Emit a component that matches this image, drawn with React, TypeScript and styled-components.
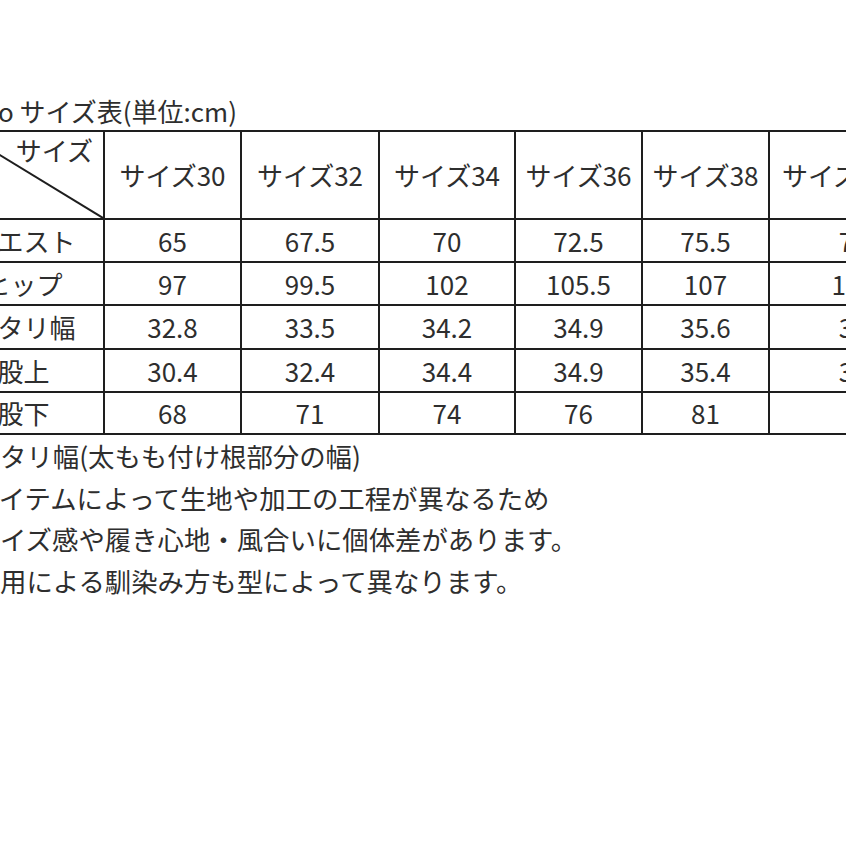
import React from 'react';
import styled, {createGlobalStyle} from 'styled-components';

const GlobalStyle = createGlobalStyle`
    html, body {
        margin: 0;
        padding: 0;
        background: #ffffff;
        overflow: hidden;
    }
    body {
        font-family: "Noto Sans CJK JP", "Noto Sans", sans-serif;
        color: #2e2e2e;
    }
`

type RowType = {
    label: string
    values: string[]
}

const SIZES = ['サイズ30', 'サイズ32', 'サイズ34', 'サイズ36', 'サイズ38', 'サイズ40']
const COL_WIDTHS = [143, 137, 138, 136, 127, 127, 190]

const ROWS: RowType[] = [
    {label: 'ウエスト', values: ['65', '67.5', '70', '72.5', '75.5', '78.5']},
    {label: 'ヒップ', values: ['97', '99.5', '102', '105.5', '107', '109.5']},
    {label: 'ワタリ幅', values: ['32.8', '33.5', '34.2', '34.9', '35.6', '36.3']},
    {label: '股上', values: ['30.4', '32.4', '34.4', '34.9', '35.4', '35.9']},
    {label: '股下', values: ['68', '71', '74', '76', '81', '86']},
]

const NOTES = [
    'ワタリ幅(太もも付け根部分の幅)',
    'アイテムによって生地や加工の工程が異なるため',
    'サイズ感や履き心地・風合いに個体差があります。',
    '着用による馴染み方も型によって異なります。',
]

export default function App() {
    return (
        <Page>
            <GlobalStyle/>
            <Title>o サイズ表(単位:cm)</Title>
            <Table>
                <colgroup>
                    {COL_WIDTHS.map((w, i) => <col key={i} style={{width: w}}/>)}
                </colgroup>
                <thead>
                <tr>
                    <Corner>
                        <Diagonal viewBox="0 0 100 100" preserveAspectRatio="none">
                            <line x1="0" y1="0" x2="100" y2="100"
                                  stroke="#1e1e1e" strokeWidth="2" vectorEffect="non-scaling-stroke"/>
                        </Diagonal>
                        <CornerLabel>サイズ</CornerLabel>
                    </Corner>
                    {SIZES.map((s, i) => (
                        <HeadCell key={s} $last={i === SIZES.length - 1}>{s}</HeadCell>
                    ))}
                </tr>
                </thead>
                <tbody>
                {ROWS.map((row, r) => (
                    <BodyRow key={row.label} $h={r === 2 ? 44 : r === 4 ? 42 : 43}>
                        <LabelCell>{row.label}</LabelCell>
                        {row.values.map((v, i) => <Cell key={i}>{v}</Cell>)}
                    </BodyRow>
                ))}
                </tbody>
            </Table>
            <Notes>
                {NOTES.map(n => <Note key={n}>{n}</Note>)}
            </Notes>
        </Page>
    );
}

const Page = styled.div`
    width: 846px;
    height: 846px;
    overflow: hidden;
    padding-top: 96px;
    box-sizing: border-box;
`

const Title = styled.div`
    margin-left: -2px;
    font-size: 26px;
    line-height: 30px;
    height: 30px;
    white-space: nowrap;
    margin-bottom: 4px;
`

const Table = styled.table`
    margin-left: -40px;
    border-collapse: collapse;
    table-layout: fixed;
    width: 998px;
    font-size: 26px;

    td, th {
        border: 2px solid #1e1e1e;
        padding: 0;
        font-weight: 400;
        white-space: nowrap;
        overflow: hidden;
    }
`

const Corner = styled.th`
    position: relative;
    height: 86px;
    vertical-align: top;
    text-align: right;
`

const Diagonal = styled.svg`
    position: absolute;
    inset: 0;
    width: 100%;
    height: 100%;
`

const CornerLabel = styled.div`
    position: relative;
    padding: 3px 10px 0 0;
    line-height: 30px;
`

const HeadCell = styled.th<{ $last?: boolean }>`
    height: 86px;
    text-align: ${p => p.$last ? 'left' : 'center'};
    padding-left: ${p => p.$last ? '12px' : '0'} !important;
    vertical-align: middle;
    line-height: 30px;
`

const BodyRow = styled.tr<{ $h: number }>`
    height: ${p => p.$h}px;
`

const Cell = styled.td`
    text-align: center;
    vertical-align: middle;
    line-height: 30px;
`

const LabelCell = styled(Cell)`
    padding-right: 18px !important;
`

const Notes = styled.div`
    margin-left: -26.4px;
    margin-top: 0;
    font-size: 26.4px;
`

const Note = styled.div`
    line-height: 41.6px;
    white-space: nowrap;
`
